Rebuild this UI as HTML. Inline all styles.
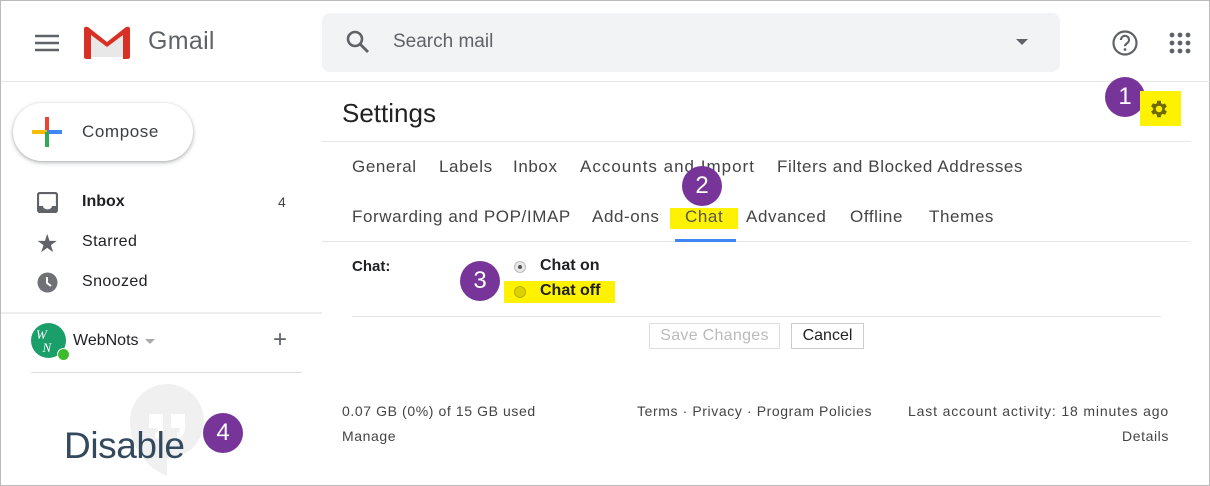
<!DOCTYPE html>
<html><head><style>
*{margin:0;padding:0;box-sizing:border-box}
body{width:1210px;height:486px;background:#fff;font-family:"Liberation Sans",Arial,sans-serif;position:relative;overflow:hidden;border:1px solid #bbb;color:#202124}
.a{position:absolute;white-space:nowrap}
.badge{position:absolute;width:40px;height:40px;border-radius:50%;background:#77359a;color:#fff;font-size:24px;text-align:center;line-height:40px}
.tab{position:absolute;font-size:17px;color:#444;letter-spacing:0.6px;white-space:nowrap}
.hl{position:absolute;background:#fff200}
.ft{position:absolute;font-size:14px;color:#444;letter-spacing:0.6px;white-space:nowrap}
</style></head><body>
<svg class="a" style="left:34px;top:32px" width="24" height="20" viewBox="0 0 24 20"><path d="M0 3h24M0 10h24M0 17h24" stroke="#5f6368" stroke-width="2.4"/></svg>
<svg class="a" style="left:83px;top:25px" width="46" height="33" viewBox="0 0 46 33"><path d="M3 4 L23 19 L43 4 V31 H3Z" fill="#e8e8e8"/><path d="M0 3 Q0 0 4 1 L23 16 L42 1 Q46 0 46 3 V31 Q46 33 43 33 H39 V9 L23 21 L7 9 V33 H3 Q0 33 0 31Z" fill="#d93025"/></svg>
<div class="a" style="left:147px;top:26px;font-size:25px;color:#5f6368;letter-spacing:0.3px">Gmail</div>
<div class="a" style="left:321px;top:12px;width:738px;height:59px;background:#f1f3f4;border-radius:8px"></div>
<svg class="a" style="left:344px;top:28px" width="26" height="26" viewBox="0 0 26 26"><circle cx="10" cy="10" r="7" fill="none" stroke="#5f6368" stroke-width="2.6"/><path d="M15 15l8 8" stroke="#5f6368" stroke-width="2.8"/></svg>
<div class="a" style="left:392px;top:30px;font-size:19px;color:#5f6368">Search mail</div>
<div class="a" style="left:1015px;top:38px;border-left:6px solid transparent;border-right:6px solid transparent;border-top:6px solid #5f6368"></div>
<svg class="a" style="left:1110px;top:28px" width="28" height="28" viewBox="0 0 28 28"><circle cx="14" cy="14" r="11.5" fill="none" stroke="#5f6368" stroke-width="2.2"/><path d="M10 11a4 4 0 1 1 6 3.3c-1.3.8-2 1.5-2 3" fill="none" stroke="#5f6368" stroke-width="2.2"/><circle cx="14" cy="20.5" r="1.4" fill="#5f6368"/></svg>
<svg class="a" style="left:1168px;top:31px" width="22" height="22" viewBox="0 0 22 22" fill="#5f6368"><circle cx="3" cy="3" r="2.4"/><circle cx="11" cy="3" r="2.4"/><circle cx="19" cy="3" r="2.4"/><circle cx="3" cy="11" r="2.4"/><circle cx="11" cy="11" r="2.4"/><circle cx="19" cy="11" r="2.4"/><circle cx="3" cy="19" r="2.4"/><circle cx="11" cy="19" r="2.4"/><circle cx="19" cy="19" r="2.4"/></svg>
<div class="a" style="left:0;top:80px;width:1210px;height:1px;background:#e6e6e6"></div>
<div class="a" style="left:12px;top:102px;width:180px;height:58px;border-radius:29px;background:#fff;box-shadow:0 1px 3px rgba(60,64,67,.35),0 2px 6px rgba(60,64,67,.15)"></div>
<svg class="a" style="left:31px;top:116px" width="30" height="30" viewBox="0 0 30 30"><rect x="13" y="0" width="4" height="15" fill="#ea4335"/><rect x="0" y="13" width="15" height="4" fill="#fbbc04"/><rect x="15" y="13" width="15" height="4" fill="#4285f4"/><rect x="13" y="15" width="4" height="15" fill="#34a853"/></svg>
<div class="a" style="left:81px;top:121px;font-size:17px;color:#3c4043;letter-spacing:0.6px">Compose</div>
<svg class="a" style="left:36px;top:191px" width="21" height="21" viewBox="0 0 21 21"><rect x="1" y="1" width="19" height="19" rx="2" fill="none" stroke="#5f6368" stroke-width="2.2"/><path d="M1 14h5a4 3 0 0 0 9 0h5v6H1z" fill="#5f6368"/></svg>
<div class="a" style="left:81px;top:192px;font-size:16px;font-weight:bold">Inbox</div>
<div class="a" style="left:277px;top:193px;font-size:14px;color:#444">4</div>
<div class="a" style="left:35px;top:228px;font-size:25px;color:#5f6368">★</div>
<div class="a" style="left:81px;top:232px;font-size:16px;letter-spacing:0.4px">Starred</div>
<svg class="a" style="left:36px;top:271px" width="21" height="21" viewBox="0 0 21 21"><circle cx="10.5" cy="10.5" r="10" fill="#6f7175"/><path d="M10 5v6l4 3" fill="none" stroke="#fff" stroke-width="2"/></svg>
<div class="a" style="left:81px;top:272px;font-size:16px;letter-spacing:0.4px">Snoozed</div>
<div class="a" style="left:0;top:311px;width:321px;height:2px;background:#eee"></div>
<div class="a" style="left:30px;top:322px;width:35px;height:35px;border-radius:50%;background:#1a9f6b;color:#fff;font-family:'Liberation Serif',serif;font-style:italic;font-size:13px;line-height:13px;padding:5px 0 0 5px">W<br>&nbsp;&nbsp;N</div>
<div class="a" style="left:56px;top:347px;width:13px;height:13px;border-radius:50%;background:#3dbb2b;border:1.5px solid #fff"></div>
<div class="a" style="left:72px;top:331px;font-size:16px">WebNots</div>
<div class="a" style="left:144px;top:338px;border-left:5px solid transparent;border-right:5px solid transparent;border-top:5px solid #aaa"></div>
<div class="a" style="left:272px;top:325px;font-size:24px;color:#5f6368;font-weight:300">+</div>
<div class="a" style="left:30px;top:371px;width:271px;height:1px;background:#ddd"></div>
<svg class="a" style="left:128px;top:383px" width="76" height="92" viewBox="0 0 76 92"><path d="M38 0a37 37 0 0 1 0 74v18c-20-8-37-28-37-55A37 37 0 0 1 38 0z" fill="#f0f0f0"/><path d="M20 30h14v14c0 6-4 10-8 11v-6c2 0 3-3 3-5h-9zM42 30h14v14c0 6-4 10-8 11v-6c2 0 3-3 3-5h-9z" fill="#fff"/></svg>
<div class="a" style="left:63px;top:424px;font-size:37px;color:#34495e;letter-spacing:-0.4px">Disable</div>
<div class="badge" style="left:202px;top:412px">4</div>
<div class="a" style="left:341px;top:97px;font-size:26px;color:#222">Settings</div>
<div class="badge" style="left:1104px;top:76px">1</div>
<div class="hl" style="left:1139px;top:90px;width:41px;height:35px"></div>
<svg class="a" style="left:1147px;top:97px" width="22" height="22" viewBox="0 0 24 24"><path fill="#6f6a00" d="M19.4 13a7.5 7.5 0 0 0 0-2l2.1-1.6-2-3.5-2.5 1a7 7 0 0 0-1.7-1L15 3h-4l-.4 2.7a7 7 0 0 0-1.7 1l-2.5-1-2 3.5L6.6 11a7.5 7.5 0 0 0 0 2l-2.2 1.6 2 3.5 2.5-1a7 7 0 0 0 1.7 1L11 21h4l.4-2.7a7 7 0 0 0 1.7-1l2.5 1 2-3.5zM13 15.5a3.5 3.5 0 1 1 0-7 3.5 3.5 0 0 1 0 7z" transform="translate(-1 0)"/></svg>
<div class="a" style="left:321px;top:140px;width:869px;height:1px;background:#e6e6e6"></div>
<div class="tab" style="left:351px;top:156px">General</div>
<div class="tab" style="left:438px;top:156px">Labels</div>
<div class="tab" style="left:512px;top:156px">Inbox</div>
<div class="tab" style="left:579px;top:156px;letter-spacing:1px">Accounts and Import</div>
<div class="tab" style="left:776px;top:156px">Filters and Blocked Addresses</div>
<div class="tab" style="left:351px;top:206px">Forwarding and POP/IMAP</div>
<div class="tab" style="left:591px;top:206px">Add-ons</div>
<div class="hl" style="left:669px;top:207px;width:68px;height:21px"></div>
<div class="tab" style="left:684px;top:206px;color:#555">Chat</div>
<div class="tab" style="left:745px;top:206px">Advanced</div>
<div class="tab" style="left:849px;top:206px">Offline</div>
<div class="tab" style="left:928px;top:206px">Themes</div>
<div class="badge" style="left:681px;top:165px">2</div>
<div class="a" style="left:321px;top:240px;width:869px;height:1px;background:#e6e6e6"></div>
<div class="a" style="left:674px;top:238px;width:61px;height:3px;background:#4285f4"></div>
<div class="a" style="left:351px;top:257px;font-size:15px;font-weight:bold">Chat:</div>
<div class="a" style="left:513px;top:260px;width:12px;height:12px;border-radius:50%;background:#e8e8e8;border:1px solid #bbb"></div>
<div class="a" style="left:517px;top:264px;width:4px;height:4px;border-radius:50%;background:#555"></div>
<div class="a" style="left:539px;top:256px;font-size:16px;font-weight:bold">Chat on</div>
<div class="badge" style="left:459px;top:260px">3</div>
<div class="hl" style="left:503px;top:280px;width:111px;height:22px"></div>
<div class="a" style="left:513px;top:285px;width:12px;height:12px;border-radius:50%;background:#dcd200;border:1px solid #bbb000"></div>
<div class="a" style="left:539px;top:281px;font-size:16px;font-weight:bold">Chat off</div>
<div class="a" style="left:351px;top:315px;width:809px;height:1px;background:#e3e3e3"></div>
<div class="a" style="left:648px;top:322px;width:131px;height:26px;border:1px solid #ddd;font-size:16px;color:#bbb;text-align:center;line-height:24px;letter-spacing:0.3px">Save Changes</div>
<div class="a" style="left:790px;top:322px;width:73px;height:26px;border:1px solid #ccc;font-size:16px;color:#222;text-align:center;line-height:24px">Cancel</div>
<div class="ft" style="left:341px;top:402px">0.07 GB (0%) of 15 GB used</div>
<div class="ft" style="left:341px;top:427px">Manage</div>
<div class="ft" style="left:636px;top:402px">Terms · Privacy · Program Policies</div>
<div class="ft" style="right:40px;top:402px;letter-spacing:0.85px">Last account activity: 18 minutes ago</div>
<div class="ft" style="right:40px;top:427px">Details</div>
</body></html>
